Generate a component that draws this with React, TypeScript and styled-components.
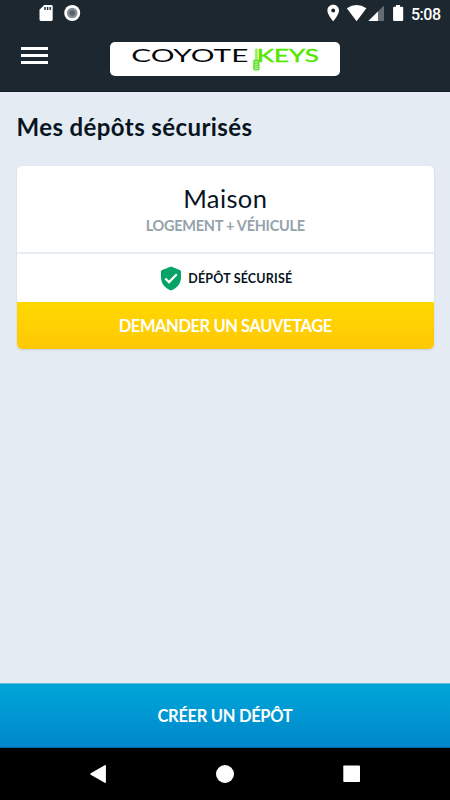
import React from "react";
import styled, { createGlobalStyle } from "styled-components";

const GlobalStyle = createGlobalStyle`
  *, *::before, *::after { box-sizing: border-box; }
  html, body { margin: 0; padding: 0; }
  body { background: #e4ebf3; }
  button { border: 0; margin: 0; padding: 0; background: none; font: inherit; color: inherit; }
  svg { display: block; }
`;

const Screen = styled.div`
  width: 100%;
  height: 100vh;
  display: flex;
  flex-direction: column;
  background: #e4ebf3;
  color: #08151f;
  font-family: Lato, "Open Sans", sans-serif;
  overflow: hidden;
`;

const Header = styled.header`
  flex: none;
  height: 92px;
  background: #1d272f;
  border-bottom: 1px solid #141d24;
`;

const StatusBar = styled.div`
  height: 27px;
  display: flex;
  justify-content: space-between;
`;

const Toolbar = styled.div`
  height: 64px;
  display: grid;
  grid-template-columns: 110px 230px 110px;
`;

const MenuButton = styled.button`
  width: 27px;
  height: 20px;
  margin: 19px 0 0 21px;
  display: flex;
  flex-direction: column;
  gap: 4px;
  padding-top: 1px;
`;

const MenuLine = styled.span`
  height: 3px;
  width: 27px;
  background: #fff;
`;

const LogoPlate = styled.div`
  margin-top: 15px;
  height: 34px;
  border-radius: 5px;
  background: #fff;
`;

const Main = styled.main`
  flex: 1;
  padding: 21px 16px 0 16.5px;
`;

const Title = styled.h1`
  margin: 0;
  height: 53px;
  font-size: 24px;
  line-height: 28px;
  font-weight: 700;
  white-space: nowrap;
`;

const Card = styled.section`
  border-radius: 5px;
  overflow: hidden;
  background: #fff;
  box-shadow: 0 1px 2px rgba(60, 80, 110, 0.2);
`;

const CardHead = styled.div`
  height: 88px;
  padding-top: 17px;
  border-bottom: 2px solid #e6edf3;
  text-align: center;
`;

const Name = styled.div`
  font-size: 25.5px;
  line-height: 30px;
  font-weight: 400;
`;

const Kind = styled.div`
  margin-top: 4px;
  font-size: 14.5px;
  line-height: 18px;
  font-weight: 700;
  color: #94a2ab;
`;

const Secured = styled.div`
  height: 48px;
  padding-left: 2px;
  display: flex;
  align-items: center;
  justify-content: center;
  gap: 6px;
  font-size: 12.5px;
  font-weight: 700;
`;

const RescueButton = styled.button`
  display: block;
  width: 100%;
  height: 47px;
  background: linear-gradient(#ffd800, #ffc805);
  color: #fff;
  font-size: 16.5px;
  font-weight: 700;
`;

const CreateButton = styled.button`
  flex: none;
  height: 65px;
  border-top: 1px solid #70b9d6;
  border-bottom: 1px solid #0069a4;
  background: linear-gradient(#00a7d8, #0087cb);
  color: #fff;
  font-size: 16.5px;
  font-weight: 700;
`;

const NavBar = styled.nav`
  flex: none;
  height: 52px;
  background: #000;
`;

const StatusIcons = () => (
  <>
    <svg width="90" height="27" viewBox="0 0 90 27" aria-hidden="true">
      <path d="M44.2 5h7.1q1.4 0 1.4 1.4v13.2q0 1.4-1.4 1.4H40.9q-1.4 0-1.4-1.4V9.7z" fill="#fff" />
      <path d="M45 7v3M47.6 7v3M50.2 7v3" stroke="#1d272f" strokeWidth="1.4" />
      <circle cx="72.2" cy="13" r="8" fill="#fff" />
      <circle cx="72.2" cy="13" r="5.3" fill="#858c92" />
      <circle cx="72.2" cy="13" r="2.8" fill="#596169" />
    </svg>
    <svg width="130" height="27" viewBox="320 0 130 27" role="img" aria-label="5:08">
      <path fillRule="evenodd" fill="#fff" d="M333.2 4.8c-3.4 0-5.8 2.5-5.8 5.7 0 4.2 5.8 10.8 5.8 10.8s5.8-6.6 5.8-10.8c0-3.2-2.4-5.7-5.8-5.7zm0 3.8a2 2 0 1 1 0 4 2 2 0 0 1 0-4z" />
      <path d="M346.8 8.2q9.8-6.6 19.6 0L356.6 21.2z" fill="#fff" />
      <path d="M384 5.5V21h-15.7z" fill="#656d74" />
      <path d="M378 11.4V21h-9.7z" fill="#fff" />
      <path d="M396 5h4v1.7h2.3q.9 0 .9.9V20q0 1-1 1h-8.1q-1 0-1-1V7.6q0-.9.9-.9h2z" fill="#fff" />
      <text x="411" y="19.5" fill="#fff" fontFamily="Roboto, sans-serif" fontSize="16" fontWeight="500" textLength="30">5:08</text>
    </svg>
  </>
);

const Logo = () => (
  <svg width="230" height="34" viewBox="110 42 230 34" role="img" aria-label="Coyote Keys">
    <g fontFamily="Lato, sans-serif" fontSize="18">
      <text x="131.3" y="62.3" fill="#05080b" textLength="117" lengthAdjust="spacingAndGlyphs">COYOTE</text>
      <text x="256.8" y="62.3" fill="#55e600" stroke="#55e600" strokeWidth=".4" textLength="62" lengthAdjust="spacingAndGlyphs">KEYS</text>
    </g>
    <path d="M254.8 60V49.5l1.5-1.5 1.5 1.5V60z" fill="#a5f57d" />
    <path d="M256.3 49v11" stroke="#60df30" strokeWidth=".7" strokeDasharray="1 1" />
    <rect x="253.2" y="59.5" width="6.3" height="11" rx="1.5" fill="#62e22d" />
    <path d="M254.7 62h3.3M254.7 64.3h3.3M254.7 66.6h3.3M254.7 68.7h3.3" stroke="#d8facb" strokeWidth=".8" />
  </svg>
);

const Shield = () => (
  <svg width="22" height="25" viewBox="0 0 22 25" aria-hidden="true">
    <path d="M11 .6l8.8 3.3q1.2.5 1.2 1.7v5.9c0 5.7-3.6 10.5-10 12.9C4.6 22 1 17.2 1 11.5V5.6q0-1.2 1.2-1.7z" fill="#05a366" />
    <path d="M5.3 12.5l3.7 3.6 7.8-7.9" fill="none" stroke="#fff" strokeWidth="2.2" />
  </svg>
);

const NavIcons = () => (
  <svg width="450" height="52" viewBox="0 748 450 52" aria-hidden="true">
    <path d="M90.7 773.3l14-8q1.2-.7 1.2.7v16q0 1.4-1.2.7l-14-8q-1-.7 0-1.4z" fill="#fff" />
    <circle cx="225" cy="774" r="9" fill="#fff" />
    <rect x="343.3" y="765.5" width="16.7" height="16.5" rx=".8" fill="#fff" />
  </svg>
);

const Label = styled.span<{ $spacing: number }>`
  letter-spacing: ${(p) => p.$spacing}px;
  white-space: nowrap;
`;

export default function App() {
  return (
    <Screen>
      <GlobalStyle />
      <Header>
        <StatusBar><StatusIcons /></StatusBar>
        <Toolbar>
          <MenuButton aria-label="Menu"><MenuLine /><MenuLine /><MenuLine /></MenuButton>
          <LogoPlate><Logo /></LogoPlate>
        </Toolbar>
      </Header>
      <Main>
        <Title><Label $spacing={0.4}>Mes dépôts sécurisés</Label></Title>
        <Card>
          <CardHead>
            <Name><Label $spacing={0.4}>Maison</Label></Name>
            <Kind><Label $spacing={-0.27}>LOGEMENT + VÉHICULE</Label></Kind>
          </CardHead>
          <Secured><Shield /><Label $spacing={0.18}>DÉPÔT SÉCURISÉ</Label></Secured>
          <RescueButton><Label $spacing={-0.42}>DEMANDER UN SAUVETAGE</Label></RescueButton>
        </Card>
      </Main>
      <CreateButton><Label $spacing={-0.3}>CRÉER UN DÉPÔT</Label></CreateButton>
      <NavBar><NavIcons /></NavBar>
    </Screen>
  );
}
